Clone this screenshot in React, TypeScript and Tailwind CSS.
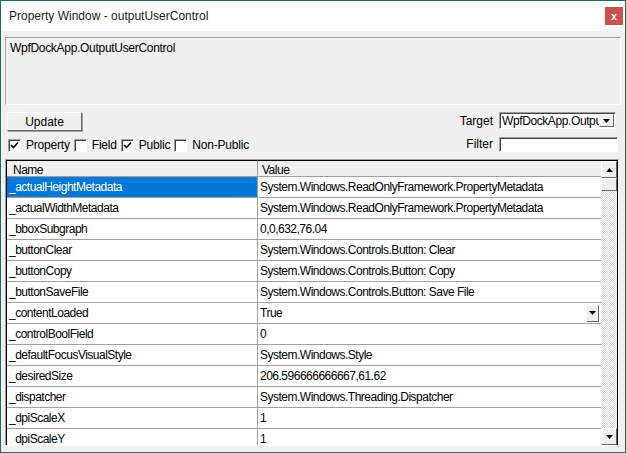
import React from "react";

const rows: [string, string][] = [
  ["_actualHeightMetadata", "System.Windows.ReadOnlyFramework.PropertyMetadata"],
  ["_actualWidthMetadata", "System.Windows.ReadOnlyFramework.PropertyMetadata"],
  ["_bboxSubgraph", "0,0,632,76.04"],
  ["_buttonClear", "System.Windows.Controls.Button: Clear"],
  ["_buttonCopy", "System.Windows.Controls.Button: Copy"],
  ["_buttonSaveFile", "System.Windows.Controls.Button: Save File"],
  ["_contentLoaded", "True"],
  ["_controlBoolField", "0"],
  ["_defaultFocusVisualStyle", "System.Windows.Style"],
  ["_desiredSize", "206.596666666667,61.62"],
  ["_dispatcher", "System.Windows.Threading.Dispatcher"],
  ["_dpiScaleX", "1"],
  ["_dpiScaleY", "1"],
];

function Arrow({ up }: { up?: boolean }) {
  return (
    <svg width="7" height="4" viewBox="0 0 7 4">
      <path d={up ? "M0 4 L3.5 0 L7 4 Z" : "M0 0 L7 0 L3.5 4 Z"} fill="#000" />
    </svg>
  );
}

function CheckBox({ label, checked }: { label: string; checked?: boolean }) {
  return (
    <div className="flex items-center gap-[5px] mr-[4px]">
      <div className="w-[13px] h-[13px] bg-white border border-t-[#a0a0a0] border-l-[#a0a0a0] border-r-white border-b-white shadow-[inset_1px_1px_0_#404040] flex items-center justify-center">
        {checked && (
          <svg width="9" height="9" viewBox="0 0 9 9">
            <path d="M1 4 L3.5 6.5 L8 1.5" stroke="#000" strokeWidth="1.6" fill="none" />
          </svg>
        )}
      </div>
      <span className="tracking-[-0.2px]">{label}</span>
    </div>
  );
}

export default function App() {
  return (
    <div className="w-[626px] h-[453px] border border-[#1b6b5c] bg-[#f0f0f0] flex flex-col text-[12px] text-black font-['Liberation_Sans',sans-serif] overflow-hidden">
      <div className="h-[30px] bg-white flex items-center justify-between pl-[8px] pr-[2px] shrink-0">
        <span className="text-[12px] text-[#1a1a1a]">Property Window - outputUserControl</span>
        <div className="w-[18px] h-[18px] bg-[#c75050] text-white text-[10px] font-bold flex items-center justify-center">x</div>
      </div>

      <div className="flex flex-col px-[4px] pt-[6px]">
        <div className="h-[68px] border border-[#a0a0a0] border-r-white border-b-white bg-[#f0f0f0] px-[4px] pt-[1px] tracking-[-0.3px]">
          WpfDockApp.OutputUserControl
        </div>

        <div className="flex justify-between mt-[7px]">
          <div className="flex flex-col pl-[2px]">
            <div className="w-[75px] h-[19px] bg-[#f0f0f0] border border-t-white border-l-white border-r-[#696969] border-b-[#696969] shadow-[1px_1px_0_#a0a0a0] flex items-center justify-center">
              Update
            </div>
            <div className="flex items-center h-[14px] mt-[7px] pl-[1px]">
              <CheckBox label="Property" checked />
              <CheckBox label="Field" />
              <CheckBox label="Public" checked />
              <CheckBox label="Non-Public" />
            </div>
          </div>
          <div className="grid grid-cols-[auto_119px] gap-x-[6px] gap-y-[8px] items-center pr-[3px] content-start">
            <span className="text-right leading-[16px]">Target</span>
            <div className="h-[17px] w-[117px] bg-white border border-[#a0a0a0] border-r-white border-b-white shadow-[inset_1px_1px_0_#404040] flex items-center">
              <span className="flex-1 overflow-hidden whitespace-nowrap pl-[2px] tracking-[-0.4px]">WpfDockApp.OutputUserControl</span>
              <div className="w-[15px] h-[13px] bg-[#f0f0f0] border border-t-white border-l-white border-r-[#696969] border-b-[#696969] flex items-center justify-center mr-[1px]">
                <Arrow />
              </div>
            </div>
            <span className="text-right leading-[15px]">Filter</span>
            <div className="h-[15px] w-[119px] bg-white border border-[#a0a0a0] border-r-white border-b-white shadow-[inset_1px_1px_0_#404040]" />
          </div>
        </div>

        <div className="mt-[7px] h-[287px] border border-[#a0a0a0] border-r-white border-b-white shadow-[inset_1px_1px_0_#000] flex overflow-hidden pl-[1px] pt-[1px] w-[614px] tracking-[-0.5px]">
          <div className="flex-1 flex flex-col bg-white overflow-hidden">
            <div className="h-[16px] shrink-0 grid grid-cols-[250px_1fr] bg-[#f0f0f0] border-b border-[#a0a0a0]">
              <div className="pl-[6px] flex items-center">Name</div>
              <div className="pl-[4px] flex items-center border-l border-[#a0a0a0]">Value</div>
            </div>
            {rows.map(([name, value], i) => (
              <div key={name} className="h-[21px] shrink-0 grid grid-cols-[250px_1fr] border-b border-[#a0a0a0]">
                <div className={i === 0 ? "pl-[2px] flex items-center bg-[#0078d7] text-white" : "pl-[2px] flex items-center"}>
                  {name}
                </div>
                <div className="pl-[2px] flex items-center border-l border-[#a0a0a0] whitespace-nowrap">
                  <span className="flex-1">{value}</span>
                  {name === "_contentLoaded" && (
                    <div className="w-[13px] h-[17px] bg-[#f0f0f0] border border-t-white border-l-white border-r-[#696969] border-b-[#696969] flex items-center justify-center mr-[2px]">
                      <Arrow />
                    </div>
                  )}
                </div>
              </div>
            ))}
          </div>
          <div className="w-[17px] flex flex-col bg-[image:repeating-conic-gradient(#dcdcdc_0%_25%,#ffffff_0%_50%)] bg-[length:2px_2px] border-r border-black">
            <div className="h-[17px] bg-[#f0f0f0] border border-t-white border-l-white border-r-[#696969] border-b-[#696969] flex items-center justify-center">
              <Arrow up />
            </div>
            <div className="h-[13px] bg-[#f0f0f0] border border-t-white border-l-white border-r-[#696969] border-b-[#696969]" />
            <div className="flex-1" />
            <div className="h-[17px] bg-[#f0f0f0] border border-t-white border-l-white border-r-[#696969] border-b-[#696969] flex items-center justify-center">
              <Arrow />
            </div>
          </div>
        </div>
      </div>
    </div>
  );
}
